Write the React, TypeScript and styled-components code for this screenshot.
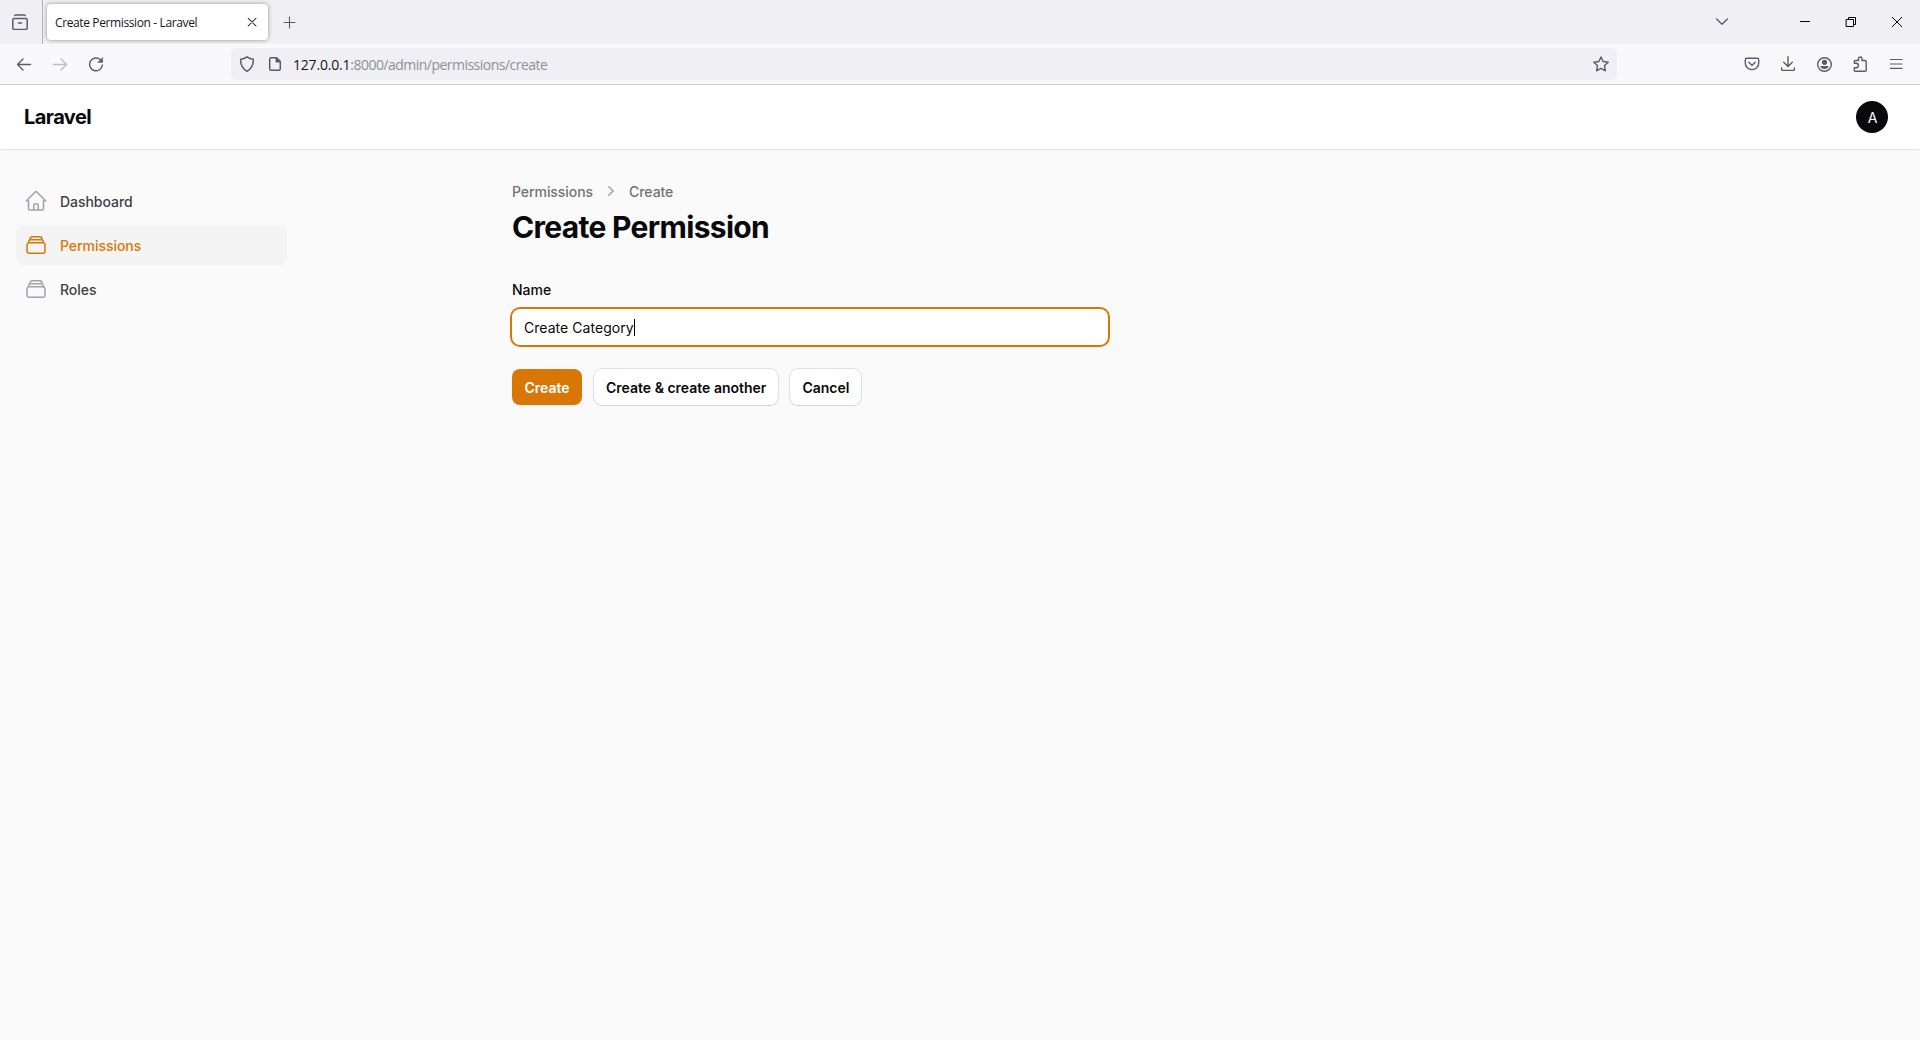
import React from "react";
import styled, { createGlobalStyle } from "styled-components";

const GlobalStyle = createGlobalStyle`
  *, *::before, *::after { box-sizing: border-box; }
  body {
    margin: 0;
    background: #fafafa;
    font-family: Inter, "Liberation Sans", sans-serif;
    color: #09090b;
    overflow: hidden;
  }
`;

const Window = styled.div`
  display: flex;
  flex-direction: column;
  width: 100%;
  height: 1040px;
  overflow: hidden;
`;

/* ---------- browser chrome ---------- */

const TabStrip = styled.div`
  display: flex;
  align-items: center;
  height: 44px;
  background: #f0f0f4;
`;

const FirefoxView = styled.div`
  display: flex;
  align-items: center;
  width: 43px;
  height: 44px;
  padding-left: 12px;
  border-right: 1px solid #b4b4ba;
`;

const Tab = styled.div`
  display: flex;
  align-items: center;
  justify-content: space-between;
  width: 221px;
  height: 36px;
  margin-left: 4px;
  padding: 0 8px;
  border-radius: 4px;
  background: #fff;
  box-shadow: 0 0 4px rgba(0, 0, 0, 0.4);
`;

const TabTitle = styled.span`
  padding-top: 2px;
  font: 12px/18px "Open Sans", "Noto Sans", sans-serif;
  letter-spacing: -0.38px;
  white-space: nowrap;
  color: #15141a;
`;

const NewTab = styled.div`
  display: flex;
  margin-left: 13px;
`;

const WindowControls = styled.div`
  display: flex;
  align-items: center;
  gap: 30px;
  margin-left: auto;
  padding-right: 15px;
`;

const TabListButton = styled.div`
  display: flex;
  margin-right: 37px;
`;

const Toolbar = styled.div`
  display: flex;
  align-items: center;
  height: 41px;
  padding: 0 16px;
  border-bottom: 1px solid #cccccf;
  background: #f9f9fb;
`;

const IconRow = styled.div`
  display: flex;
  gap: 20px;
`;

const AddressBar = styled.div`
  display: flex;
  align-items: center;
  width: 1386px;
  height: 32px;
  margin: 0 127px;
  padding: 0 8px;
  border-radius: 4px;
  background: #f0f0f4;
`;

const PageInfo = styled.div`
  display: flex;
  gap: 12px;
  margin-right: 10px;
`;

const Url = styled.span`
  flex: 1;
  padding-top: 2px;
  font: 14px/20px "Open Sans", "Noto Sans", sans-serif;
  letter-spacing: -0.52px;
  white-space: nowrap;
  color: #8f8f96;
`;

const Host = styled.span`
  letter-spacing: -0.2px;
  color: #15141a;
`;

const Glyph = styled.svg<{ $color?: string; $weight?: number }>`
  display: block;
  flex: none;
  fill: none;
  stroke: ${(p) => p.$color ?? "#5b5b66"};
  stroke-width: ${(p) => p.$weight ?? 1.3};
  stroke-linecap: round;
  stroke-linejoin: round;
`;

type IconProps = { color?: string; weight?: number; children: React.ReactNode };

const ChromeIcon = ({ color, weight, children }: IconProps) => (
  <Glyph width="16" height="16" viewBox="0 0 16 16" $color={color} $weight={weight} aria-hidden>
    {children}
  </Glyph>
);

const Browser = () => (
  <header>
    <TabStrip>
      <FirefoxView>
        <ChromeIcon weight={1.5}>
          <path d="M2.800 1.500Q3.100.9 4 .9h8q.9 0 1.200.6" />
          <rect x=".8" y="4.500" width="14.400" height="10.900" rx="1.500" />
          <path d="M6.400 9h3.200" />
        </ChromeIcon>
      </FirefoxView>
      <Tab>
        <TabTitle>Create Permission - Laravel</TabTitle>
        <ChromeIcon color="#3c3b43" weight={1.15}>
          <path d="m4.300 4.300 7.600 7.600M11.900 4.300l-7.600 7.600" />
        </ChromeIcon>
      </Tab>
      <NewTab>
        <ChromeIcon weight={1.1}>
          <path d="M8.500 3v11M3 8.500h11" />
        </ChromeIcon>
      </NewTab>
      <WindowControls>
        <TabListButton>
          <ChromeIcon>
            <path d="m2.600 5 5.400 5.300L13.400 5" />
          </ChromeIcon>
        </TabListButton>
        <ChromeIcon color="#000" weight={1}>
          <path d="M3.500 7.500h9" strokeLinecap="square" />
        </ChromeIcon>
        <ChromeIcon color="#000" weight={1}>
          <path d="M3.500 5.500h7v7h-7zM5.500 5.500v-2h7v7h-2" strokeLinejoin="miter" />
        </ChromeIcon>
        <ChromeIcon color="#000" weight={1}>
          <path d="m3.300 3.300 9.400 9.400M12.700 3.300l-9.400 9.400" />
        </ChromeIcon>
      </WindowControls>
    </TabStrip>
    <Toolbar>
      <IconRow>
        <ChromeIcon weight={1.400}>
          <path d="M14.500 8.500h-13M7 3 1.500 8.500 7 14" />
        </ChromeIcon>
        <ChromeIcon color="#bcbcc2" weight={1.400}>
          <path d="M1.500 8.500h13M9 3l5.500 5.500L9 14" />
        </ChromeIcon>
        <ChromeIcon weight={1.400}>
          <path d="M12.300 3.600A6.400 6.400 0 1 0 14.400 9" />
          <path d="M14.700 1.700v4.700H10z" fill="#5b5b66" strokeWidth=".5" />
        </ChromeIcon>
      </IconRow>
      <AddressBar>
        <PageInfo>
          <ChromeIcon weight={1.500}>
            <path d="M8 .800c2 1.500 4.200 2.200 6.300 2.400.3 5-1.600 9.500-6.300 12.100C3.300 12.700 1.400 8.200 1.700 3.200 3.800 3 6 2.300 8 .800z" />
          </ChromeIcon>
          <ChromeIcon weight={1.500}>
            <path d="M9.500 1.700H4.200q-1.500 0-1.500 1.500v9.600q0 1.500 1.500 1.500h7.600q1.500 0 1.500-1.500V5.500z" />
            <path d="M9.300 1.700v4h4z" fill="#5b5b66" />
          </ChromeIcon>
        </PageInfo>
        <Url>
          <Host>127.0.0.1</Host>:8000/admin/permissions/create
        </Url>
        <ChromeIcon weight={1.400}>
          <path d="m8 1 2.100 4.500 5.100.700-3.700 3.400.9 5.200L8 12.400l-4.400 2.400.9-5.200L.800 6.200l5.100-.700z" />
        </ChromeIcon>
      </AddressBar>
      <IconRow>
        <ChromeIcon weight={1.400}>
          <path d="M2.800 2.200h10.400q1.500 0 1.500 1.500v3.500a6.700 6.400 0 0 1-13.400 0V3.700q0-1.500 1.500-1.500z" />
          <path d="m4.800 6.200 3.200 3 3.200-3" />
        </ChromeIcon>
        <ChromeIcon weight={1.400}>
          <path d="M8 .8v9.600M3.700 6.300 8 10.500l4.300-4.200M1.600 12v1.200q0 1.200 1.200 1.200h10.400q1.200 0 1.200-1.200V12" />
        </ChromeIcon>
        <ChromeIcon weight={1.400}>
          <circle cx="8.500" cy="8.500" r="6.800" />
          <circle cx="8.500" cy="6.300" r="2.600" fill="#5b5b66" stroke="none" />
          <path d="M4.300 10h8.400c-.4 1.900-2 3-4.200 3s-3.800-1.100-4.200-3z" fill="#5b5b66" stroke="none" />
        </ChromeIcon>
        <ChromeIcon weight={1.400}>
          <path d="M2.300 7.300V5.500q0-1 1-1h3.200V2.700a1.750 1.750 0 0 1 3.500 0v1.800h3.200q1 0 1 1v8.700q0 1-1 1H3.300q-1 0-1-1v-2.400h1.900a1.850 1.850 0 0 0 0-4.500z" />
        </ChromeIcon>
        <ChromeIcon weight={1.200}>
          <path d="M2.500 3.500h11.500M2.500 8h11.500M2.500 12.400h11.500" />
        </ChromeIcon>
      </IconRow>
    </Toolbar>
  </header>
);

/* ---------- admin panel ---------- */

const Topbar = styled.div`
  display: flex;
  align-items: center;
  justify-content: space-between;
  height: 64px;
  padding: 0 32px 0 24px;
  background: #fff;
  box-shadow: 0 0 0 1px rgba(9, 9, 11, 0.05), 0 1px 2px rgba(0, 0, 0, 0.05);
  clip-path: inset(0 0 -4px 0);
`;

const Brand = styled.div`
  font-size: 20px;
  line-height: 20px;
  font-weight: 700;
  letter-spacing: -0.55px;
`;

const Avatar = styled.div`
  display: flex;
  align-items: center;
  justify-content: center;
  width: 32px;
  height: 32px;
  padding: 1px 0 0 1px;
  border-radius: 50%;
  background: #09090b;
  color: #fff;
  font-size: 14px;
`;

const Body = styled.div`
  display: flex;
  flex: 1;
`;

const Sidebar = styled.nav`
  display: flex;
  flex-direction: column;
  gap: 4px;
  width: 320px;
  padding: 32px 33px 0 16px;
`;

const NavItem = styled.a<{ $active?: boolean }>`
  display: flex;
  align-items: center;
  gap: 12px;
  height: 40px;
  padding: 8px;
  border-radius: 8px;
  background: ${(p) => (p.$active ? "#f4f4f4" : "transparent")};
  color: ${(p) => (p.$active ? "#d97706" : "#3f3f46")};
  font-size: 14px;
  line-height: 20px;
  font-weight: 500;
`;

const NavLabel = styled.span`
  padding-top: 2px;
  letter-spacing: -0.04px;
`;

const Main = styled.main`
  display: flex;
  flex-direction: column;
  gap: 32px;
  width: 1280px;
  margin: 0 auto;
  padding: 32px;
`;

const Breadcrumbs = styled.div`
  display: flex;
  align-items: center;
  gap: 8px;
  height: 20px;
  margin-bottom: 8px;
  font-size: 14px;
  line-height: 20px;
  font-weight: 500;
  letter-spacing: -0.06px;
  color: #71717a;
`;

const Crumb = styled.span`
  padding-top: 2px;
`;

const Title = styled.h1`
  margin: 0;
  font-size: 30px;
  line-height: 36px;
  font-weight: 700;
  letter-spacing: -0.69px;
`;

const Form = styled.form`
  display: flex;
  flex-direction: column;
  gap: 24px;
`;

const Field = styled.div`
  display: flex;
  flex-direction: column;
  gap: 8px;
  width: 596px;
`;

const Label = styled.label`
  height: 24px;
  font-size: 14px;
  line-height: 26px;
  font-weight: 500;
`;

const TextBox = styled.div`
  display: flex;
  align-items: center;
  height: 36px;
  padding: 1px 12px 0;
  border-radius: 8px;
  background: #fff;
  box-shadow: 0 0 0 2px #d97706;
  font-size: 14px;
  line-height: 24px;
  letter-spacing: 0.05px;
`;

const Caret = styled.span`
  width: 1px;
  height: 17px;
  background: #000;
`;

const Actions = styled.div`
  display: flex;
  gap: 12px;
`;

const Button = styled.button<{ $primary?: boolean }>`
  height: 36px;
  min-width: 70px;
  padding: 2px 12px 0;
  border: 0;
  border-radius: 8px;
  background: ${(p) => (p.$primary ? "#d97706" : "#fff")};
  color: ${(p) => (p.$primary ? "#fff" : "#09090b")};
  box-shadow: ${(p) =>
    p.$primary ? "0 1px 2px rgba(0,0,0,.05)" : "0 0 0 1px rgba(9,9,11,.1), 0 1px 2px rgba(0,0,0,.05)"};
  font: 600 14px/20px Inter, sans-serif;
  white-space: nowrap;
`;

const STACK =
  "M6 6.878V6a2.25 2.25 0 0 1 2.25-2.25h7.5A2.25 2.25 0 0 1 18 6v.878m-12 0c.235-.083.487-.128.75-.128h10.5c.263 0 .515.045.75.128m-12 0A2.25 2.25 0 0 0 4.5 9v.878m13.5-3A2.25 2.25 0 0 1 19.5 9v.878m0 0a2.246 2.246 0 0 0-.75-.128H5.25c-.263 0-.515.045-.75.128m15 0A2.25 2.25 0 0 1 21 12v6a2.25 2.25 0 0 1-2.25 2.25H5.25A2.25 2.25 0 0 1 3 18v-6c0-.98.626-1.813 1.5-2.122";
const HOME =
  "m2.25 12 8.954-8.955c.44-.439 1.152-.439 1.591 0L21.75 12M4.5 9.75v10.125c0 .621.504 1.125 1.125 1.125H9.75v-4.875c0-.621.504-1.125 1.125-1.125h2.25c.621 0 1.125.504 1.125 1.125V21h4.125c.621 0 1.125-.504 1.125-1.125V9.75M8.25 21h8.25";

const NAV = [
  { label: "Dashboard", icon: HOME, active: false },
  { label: "Permissions", icon: STACK, active: true },
  { label: "Roles", icon: STACK, active: false },
];

export default function App() {
  return (
    <>
      <GlobalStyle />
      <Window>
        <Browser />
        <Topbar>
          <Brand>Laravel</Brand>
          <Avatar>A</Avatar>
        </Topbar>
        <Body>
          <Sidebar>
            {NAV.map((item) => (
              <NavItem key={item.label} $active={item.active}>
                <Glyph
                  width="24"
                  height="24"
                  viewBox="0 0 24 24"
                  $color={item.active ? "#d97706" : "#a1a1aa"}
                  $weight={1.5}
                  aria-hidden
                >
                  <path d={item.icon} />
                </Glyph>
                <NavLabel>{item.label}</NavLabel>
              </NavItem>
            ))}
          </Sidebar>
          <Main>
            <div>
              <Breadcrumbs>
                <Crumb>Permissions</Crumb>
                <svg width="20" height="20" viewBox="0 0 20 20" fill="#a1a1aa" aria-hidden>
                  <path d="M7.21 14.77a.75.75 0 0 1 .02-1.06L11.168 10 7.23 6.29a.75.75 0 1 1 1.04-1.08l4.5 4.25a.75.75 0 0 1 0 1.08l-4.5 4.25a.75.75 0 0 1-1.06-.02Z" />
                </svg>
                <Crumb>Create</Crumb>
              </Breadcrumbs>
              <Title>Create Permission</Title>
            </div>
            <Form>
              <Field>
                <Label>Name</Label>
                <TextBox>
                  <span>Create Category</span>
                  <Caret />
                </TextBox>
              </Field>
              <Actions>
                <Button type="button" $primary>
                  Create
                </Button>
                <Button type="button">Create &amp; create another</Button>
                <Button type="button">Cancel</Button>
              </Actions>
            </Form>
          </Main>
        </Body>
      </Window>
    </>
  );
}
